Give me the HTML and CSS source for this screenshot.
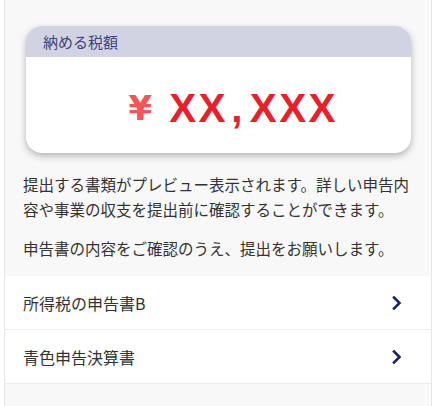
FILE: index.html
```html
<!DOCTYPE html>
<html lang="ja">
<head>
<meta charset="utf-8">
<link rel="stylesheet" href="styles.css">
</head>
<body>
<div class="screen">
  <div class="card">
    <div class="card-head">納める税額</div>
    <div class="card-body">
      <span class="yen">¥</span>
      <span class="amount">XX<span class="comma">,</span>XXX</span>
    </div>
  </div>
  <div class="desc">
    <p>提出する書類がプレビュー表示されます。詳しい申告内容や事業の収支を提出前に確認することができます。</p>
    <p>申告書の内容をご確認のうえ、提出をお願いします。</p>
  </div>
  <ul class="list">
    <li class="row"><span>所得税の申告書B</span>
      <svg class="chev" width="10" height="14" viewBox="0 0 10 14"><polyline points="2,1.5 7.5,7 2,12.5" fill="none" stroke="#1f2463" stroke-width="2.6" stroke-linecap="square"/></svg>
    </li>
    <li class="row"><span>青色申告決算書</span>
      <svg class="chev" width="10" height="14" viewBox="0 0 10 14"><polyline points="2,1.5 7.5,7 2,12.5" fill="none" stroke="#1f2463" stroke-width="2.6" stroke-linecap="square"/></svg>
    </li>
  </ul>
</div>
</body>
</html>
```
FILE: styles.css
```css
html, body {
  margin: 0;
  padding: 0;
  background: #ffffff;
}
body {
  font-family: "Noto Sans CJK JP", "Noto Sans", sans-serif;
  color: #333333;
}
.screen {
  margin: 0 4px 0 4px;
  width: 426px;
  height: 380px;
  border-left: 1px solid #e6e6e6;
  border-right: 1px solid #e6e6e6;
  background: #f8f8f8;
  padding-top: 26px;
  overflow: hidden;
}
.card {
  margin: 0 20px 0 21px;
  background: #ffffff;
  border-radius: 16px;
  overflow: hidden;
  box-shadow: 0 3px 7px rgba(0, 0, 0, 0.28);
}
.card-head {
  height: 31px;
  background: #d1d3e2;
  color: #3e4478;
  font-size: 15px;
  line-height: 31px;
  padding-left: 17px;
}
.card-body {
  height: 96px;
  display: flex;
  align-items: center;
  justify-content: center;
  padding-left: 27px;
  gap: 17px;
}
.yen {
  font-family: "DejaVu Sans", sans-serif;
  font-size: 34px;
  font-weight: 700;
  color: #f25656;
  line-height: 1;
  margin-top: 6px;
}
.amount {
  font-family: "Liberation Sans", Arial, sans-serif;
  font-weight: 700;
  font-size: 40.5px;
  letter-spacing: 2.3px;
  margin-right: -2.3px;
  margin-top: 6px;
  color: #e8202a;
  line-height: 1;
}
.comma {
  margin: 0 5px 0 3.5px;
}
.desc {
  padding: 19px 18px 0 18px;
}
.desc p {
  margin: 0 0 14px 0;
  font-size: 15.5px;
  line-height: 25px;
  color: #333333;
}
.list {
  list-style: none;
  margin: 15px 0 0 0;
  padding: 0;
}
.row {
  height: 53px;
  background: #ffffff;
  border-bottom: 1px solid #ececec;
  display: flex;
  align-items: center;
  justify-content: space-between;
  padding: 0 29px 0 18px;
  font-size: 16px;
  color: #333333;
}
```
